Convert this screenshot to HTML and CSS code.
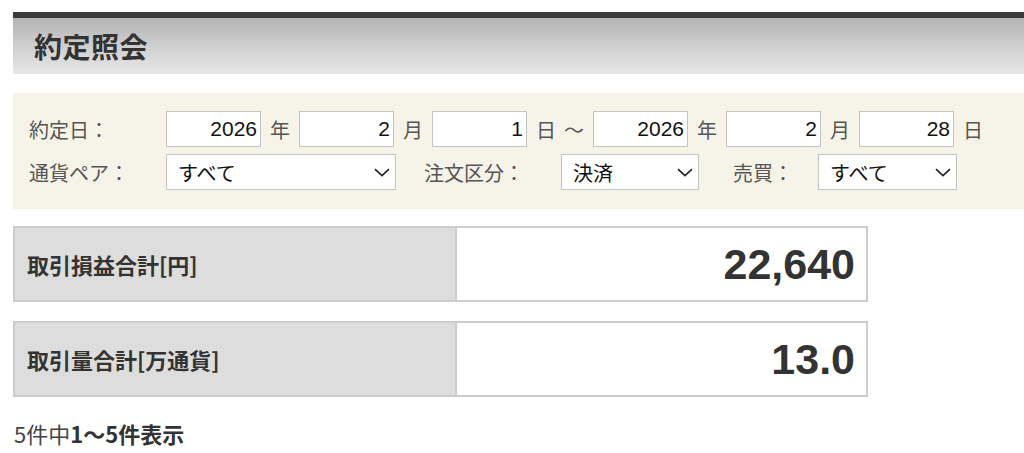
FILE: index.html
```html
<!DOCTYPE html>
<html lang="ja">
<head>
<meta charset="utf-8">
<title>約定照会</title>
<link rel="stylesheet" href="styles.css">
</head>
<body>
<div class="page">
  <div class="page-header"><h1 class="page-title">約定照会</h1></div>

  <div class="filter">
    <div class="filter-row">
      <span class="label label-first">約定日：</span>
      <span class="num-input">2026</span><span class="unit">年</span>
      <span class="num-input">2</span><span class="unit">月</span>
      <span class="num-input">1</span><span class="unit unit-day">日</span><span class="unit unit-tilde">～</span>
      <span class="num-input">2026</span><span class="unit">年</span>
      <span class="num-input">2</span><span class="unit">月</span>
      <span class="num-input">28</span><span class="unit">日</span>
    </div>
    <div class="filter-row">
      <span class="label label-first">通貨ペア：</span>
      <span class="select select-pair"><span class="select-text">すべて</span><svg class="chevron" width="16" height="9" viewBox="0 0 16 9"><path d="M1 1.2 L8 7.6 L15 1.2" fill="none" stroke="#222" stroke-width="1.6"/></svg></span>
      <span class="label label-order">注文区分：</span>
      <span class="select select-order"><span class="select-text">決済</span><svg class="chevron" width="16" height="9" viewBox="0 0 16 9"><path d="M1 1.2 L8 7.6 L15 1.2" fill="none" stroke="#222" stroke-width="1.6"/></svg></span>
      <span class="label label-side">売買：</span>
      <span class="select select-side"><span class="select-text">すべて</span><svg class="chevron" width="16" height="9" viewBox="0 0 16 9"><path d="M1 1.2 L8 7.6 L15 1.2" fill="none" stroke="#222" stroke-width="1.6"/></svg></span>
    </div>
  </div>

  <div class="summary">
    <div class="summary-label">取引損益合計[円]</div>
    <div class="summary-value">22,640</div>
  </div>
  <div class="summary">
    <div class="summary-label">取引量合計[万通貨]</div>
    <div class="summary-value">13.0</div>
  </div>

  <p class="count">5件中<b>1～5件表示</b></p>
</div>
</body>
</html>
```

FILE: styles.css
```css
html, body {
  margin: 0;
  padding: 0;
  background: #ffffff;
}
body {
  font-family: "Noto Sans CJK JP", "Noto Sans", sans-serif;
  color: #333;
}
.page {
  padding: 12px 0 0 13px;
}
.page-header {
  border-top: 6px solid #3a3a3a;
  height: 56px;
  background: linear-gradient(to bottom, #b3b3b3 0%, #cfcfcf 50%, #e7e7e7 100%);
  display: flex;
  align-items: center;
  padding-left: 21px;
}
.page-title {
  margin: 0;
  font-size: 28px;
  font-weight: 700;
  color: #333;
  line-height: 1;
  letter-spacing: 0.5px;
}
.filter {
  margin-top: 19px;
  background: #f6f4e9;
  padding: 18px 0 19px 16px;
  display: flex;
  flex-direction: column;
  gap: 7px;
}
.filter-row {
  display: flex;
  align-items: center;
  height: 36px;
}
.label {
  font-size: 20px;
  color: #555;
  white-space: nowrap;
}
.label-first { width: 137px; }
.label-order { width: 137px; margin-left: 28px; }
.label-side { width: 85px; margin-left: 34px; }
.num-input {
  box-sizing: border-box;
  width: 95px;
  height: 36px;
  background: #fff;
  border: 1.5px solid #c4c4c4;
  font-family: "Liberation Sans", Arial, sans-serif;
  font-size: 21px;
  color: #111;
  text-align: right;
  padding-right: 3px;
  line-height: 33px;
}
.unit {
  font-size: 20px;
  color: #555;
  margin: 0 9px;
}
.unit-day { margin: 0 8px 0 9px; }
.unit-tilde { margin: 0 9px 0 0; }
.select {
  box-sizing: border-box;
  height: 36px;
  background: #fff;
  border: 1.5px solid #c4c4c4;
  display: flex;
  align-items: center;
  padding: 0 5px 0 11px;
}
.select-pair { width: 230px; }
.select-order { width: 138px; }
.select-side { width: 139px; }
.select-text {
  font-size: 20px;
  color: #111;
}
.chevron {
  margin-left: auto;
}
.summary {
  margin-top: 19px;
  width: 855px;
  height: 76px;
  box-sizing: border-box;
  border: 2px solid #cccccc;
  display: flex;
}
.filter + .summary { margin-top: 17px; }
.summary-label {
  width: 442px;
  background: #dddddd;
  border-right: 2px solid #cccccc;
  display: flex;
  align-items: center;
  padding-left: 12px;
  box-sizing: border-box;
  font-size: 22px;
  font-weight: 700;
  color: #333;
}
.summary-value {
  flex: 1;
  background: #fff;
  display: flex;
  align-items: center;
  justify-content: flex-end;
  padding-right: 11px;
  font-family: "Liberation Sans", Arial, sans-serif;
  font-size: 43px;
  font-weight: 700;
  color: #333;
}
.count {
  margin: 20px 0 0 1px;
  font-size: 22px;
  line-height: 32px;
  color: #444;
}
.count b {
  font-weight: 700;
  color: #333;
}
```
